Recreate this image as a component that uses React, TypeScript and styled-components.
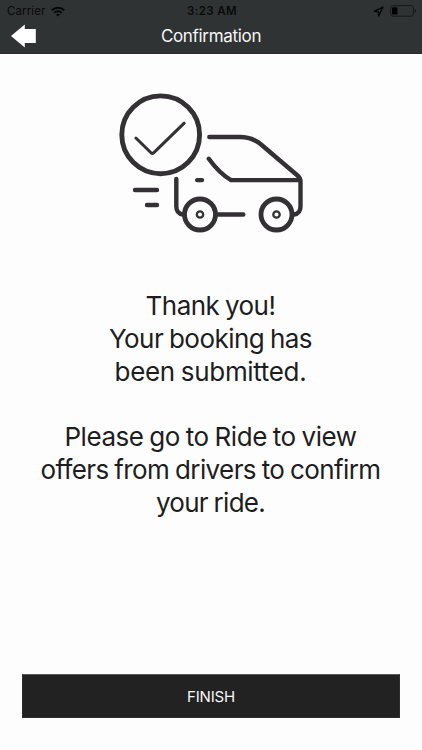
import React from "react";
import styled, { createGlobalStyle } from "styled-components";

const GlobalStyle = createGlobalStyle`
  * { box-sizing: border-box; }
  html, body { margin: 0; padding: 0; background: #fdfdfd; }
  body { font-family: Inter, "Liberation Sans", sans-serif; }
`;

const Screen = styled.div`
  width: 422px;
  height: 750px;
  display: flex;
  flex-direction: column;
  background: #fdfdfd;
  overflow: hidden;
`;

const Header = styled.header`
  height: 54px;
  flex: none;
  background: #303334;
  border-bottom: 1px solid #292c2d;
`;

const StatusBar = styled.div`
  height: 21px;
  padding: 1px 5px 0 7px;
  display: grid;
  grid-template-columns: 1fr auto 1fr;
  align-items: center;
  color: #090a0a;
  font-size: 11.5px;
  line-height: 20px;
`;

const StatusGroup = styled.div<{ $end?: boolean }>`
  display: flex;
  align-items: center;
  gap: 6px;
  justify-content: ${(p) => (p.$end ? "flex-end" : "flex-start")};
`;

const Carrier = styled.span`
  letter-spacing: 0.1px;
`;

const Clock = styled.span`
  font-weight: 600;
  letter-spacing: 0.35px;
`;

const NavBar = styled.div`
  height: 30px;
  padding: 0 11px;
  display: grid;
  grid-template-columns: 26px 1fr 26px;
  align-items: center;
`;

const BackButton = styled.button`
  display: flex;
  padding: 0;
  border: 0;
  background: none;
`;

const Title = styled.h1`
  margin: 0;
  text-align: center;
  color: #f6f6f6;
  font-size: 17px;
  font-weight: 400;
  line-height: 30px;
  letter-spacing: -0.32px;
`;

const Content = styled.main`
  flex: 1;
  display: flex;
  flex-direction: column;
  align-items: center;
  padding: 31px 23px 32px 22px;
`;

const Illustration = styled.svg`
  flex: none;
  display: block;
`;

const Message = styled.div`
  margin-top: 50px;
  display: flex;
  flex-direction: column;
  gap: 33px;
`;

const Paragraph = styled.p`
  margin: 0;
  text-align: center;
  color: #1d1d1f;
  font-size: 26px;
  line-height: 32.8px;
  word-spacing: -1px;
`;

const Line = styled.span<{ $spacing: number }>`
  display: block;
  white-space: nowrap;
  letter-spacing: ${(p) => p.$spacing}px;
`;

const FinishButton = styled.button`
  margin-top: auto;
  width: 378px;
  height: 44px;
  flex: none;
  align-self: flex-start;
  padding: 0;
  border: 1px solid #2e2e2e;
  border-top-color: #5a5a5a;
  background: #222222;
  color: #f8f8f8;
  font-family: inherit;
  font-size: 15px;
  letter-spacing: -0.2px;
`;

const WifiIcon = () => (
  <svg width="14" height="11" viewBox="0 0 14 11" fill="none" stroke="#050606" strokeWidth="2">
    <path d="M0.8 4.2C4.3 .8 9.7 .8 13.2 4.2" />
    <path d="M3.2 6.9C5.4 4.8 8.6 4.8 10.8 6.9" />
    <path d="M7 10.6 4.9 8.5Q7 6.9 9.1 8.5Z" fill="#050606" stroke="none" />
  </svg>
);

const LocationIcon = () => (
  <svg width="11" height="11" viewBox="0 0 10 10" fill="none" stroke="#050606" strokeWidth="1.2" strokeLinejoin="round">
    <path d="M9 1 1 4.8 4.8 5.2 5.2 9Z" />
  </svg>
);

const BatteryIcon = () => (
  <svg width="27" height="12" viewBox="0 0 27 12">
    <rect x=".6" y=".6" width="22.8" height="10.6" rx="2.4" fill="none" stroke="#171919" strokeWidth="1" />
    <rect x="2" y="2.2" width="5.4" height="7.4" rx=".8" fill="#000" />
    <path d="M24.8 4C26.7 4.6 26.7 7.4 24.8 8Z" fill="#171919" />
  </svg>
);

const BackArrow = () => (
  <svg width="25" height="24" viewBox="0 0 25 24">
    <path d="M0 12 13.8 .4V5H24.8V19H13.8V23.5Z" fill="#fff" />
  </svg>
);

const CarBooked = () => (
  <Illustration
    width="201"
    height="155"
    viewBox="110 85 201 155"
    fill="none"
    stroke="#333133"
    strokeWidth="4.4"
    strokeLinecap="round"
    strokeLinejoin="round"
  >
    <circle cx="160.7" cy="134.8" r="38.9" strokeWidth="4.9" />
    <path d="M135.9 138 151 152.8Q152.3 154 153.6 152.8L184.2 123.2" strokeWidth="3" />
    <path d="M135 190H157M147 205H157M197.2 180.1H202" />
    <path d="M176.3 179V206.5Q176.3 213.5 183 214.5" />
    <path d="M209.3 137H240C249 137 254 139 260.5 144L297.5 175.5Q300.5 178 300.5 182V206.5Q300.5 213.5 294 214.5" />
    <path d="M208.8 158.8C214 166 222 175 231 180.1H299" />
    <path d="M218 214.5H243.3" />
    <circle cx="200" cy="214.5" r="15.5" strokeWidth="4.8" />
    <circle cx="276.5" cy="214.5" r="15.5" strokeWidth="4.8" />
    <circle cx="200" cy="214.5" r="3.2" strokeWidth="2.3" />
    <circle cx="276.5" cy="214.5" r="3.2" strokeWidth="2.3" />
  </Illustration>
);

export default function App() {
  return (
    <Screen>
      <GlobalStyle />
      <Header>
        <StatusBar>
          <StatusGroup>
            <Carrier>Carrier</Carrier>
            <WifiIcon />
          </StatusGroup>
          <Clock>3:23 AM</Clock>
          <StatusGroup $end>
            <LocationIcon />
            <BatteryIcon />
          </StatusGroup>
        </StatusBar>
        <NavBar>
          <BackButton aria-label="Back">
            <BackArrow />
          </BackButton>
          <Title>Confirmation</Title>
        </NavBar>
      </Header>
      <Content>
        <CarBooked />
        <Message>
          <Paragraph>
            <Line $spacing={-0.55}>Thank you!</Line>
            <Line $spacing={-0.54}>Your booking has</Line>
            <Line $spacing={-0.33}>been submitted.</Line>
          </Paragraph>
          <Paragraph>
            <Line $spacing={-0.46}>Please go to Ride to view</Line>
            <Line $spacing={-0.6}>offers from drivers to confirm</Line>
            <Line $spacing={-0.7}>your ride.</Line>
          </Paragraph>
        </Message>
        <FinishButton>FINISH</FinishButton>
      </Content>
    </Screen>
  );
}
